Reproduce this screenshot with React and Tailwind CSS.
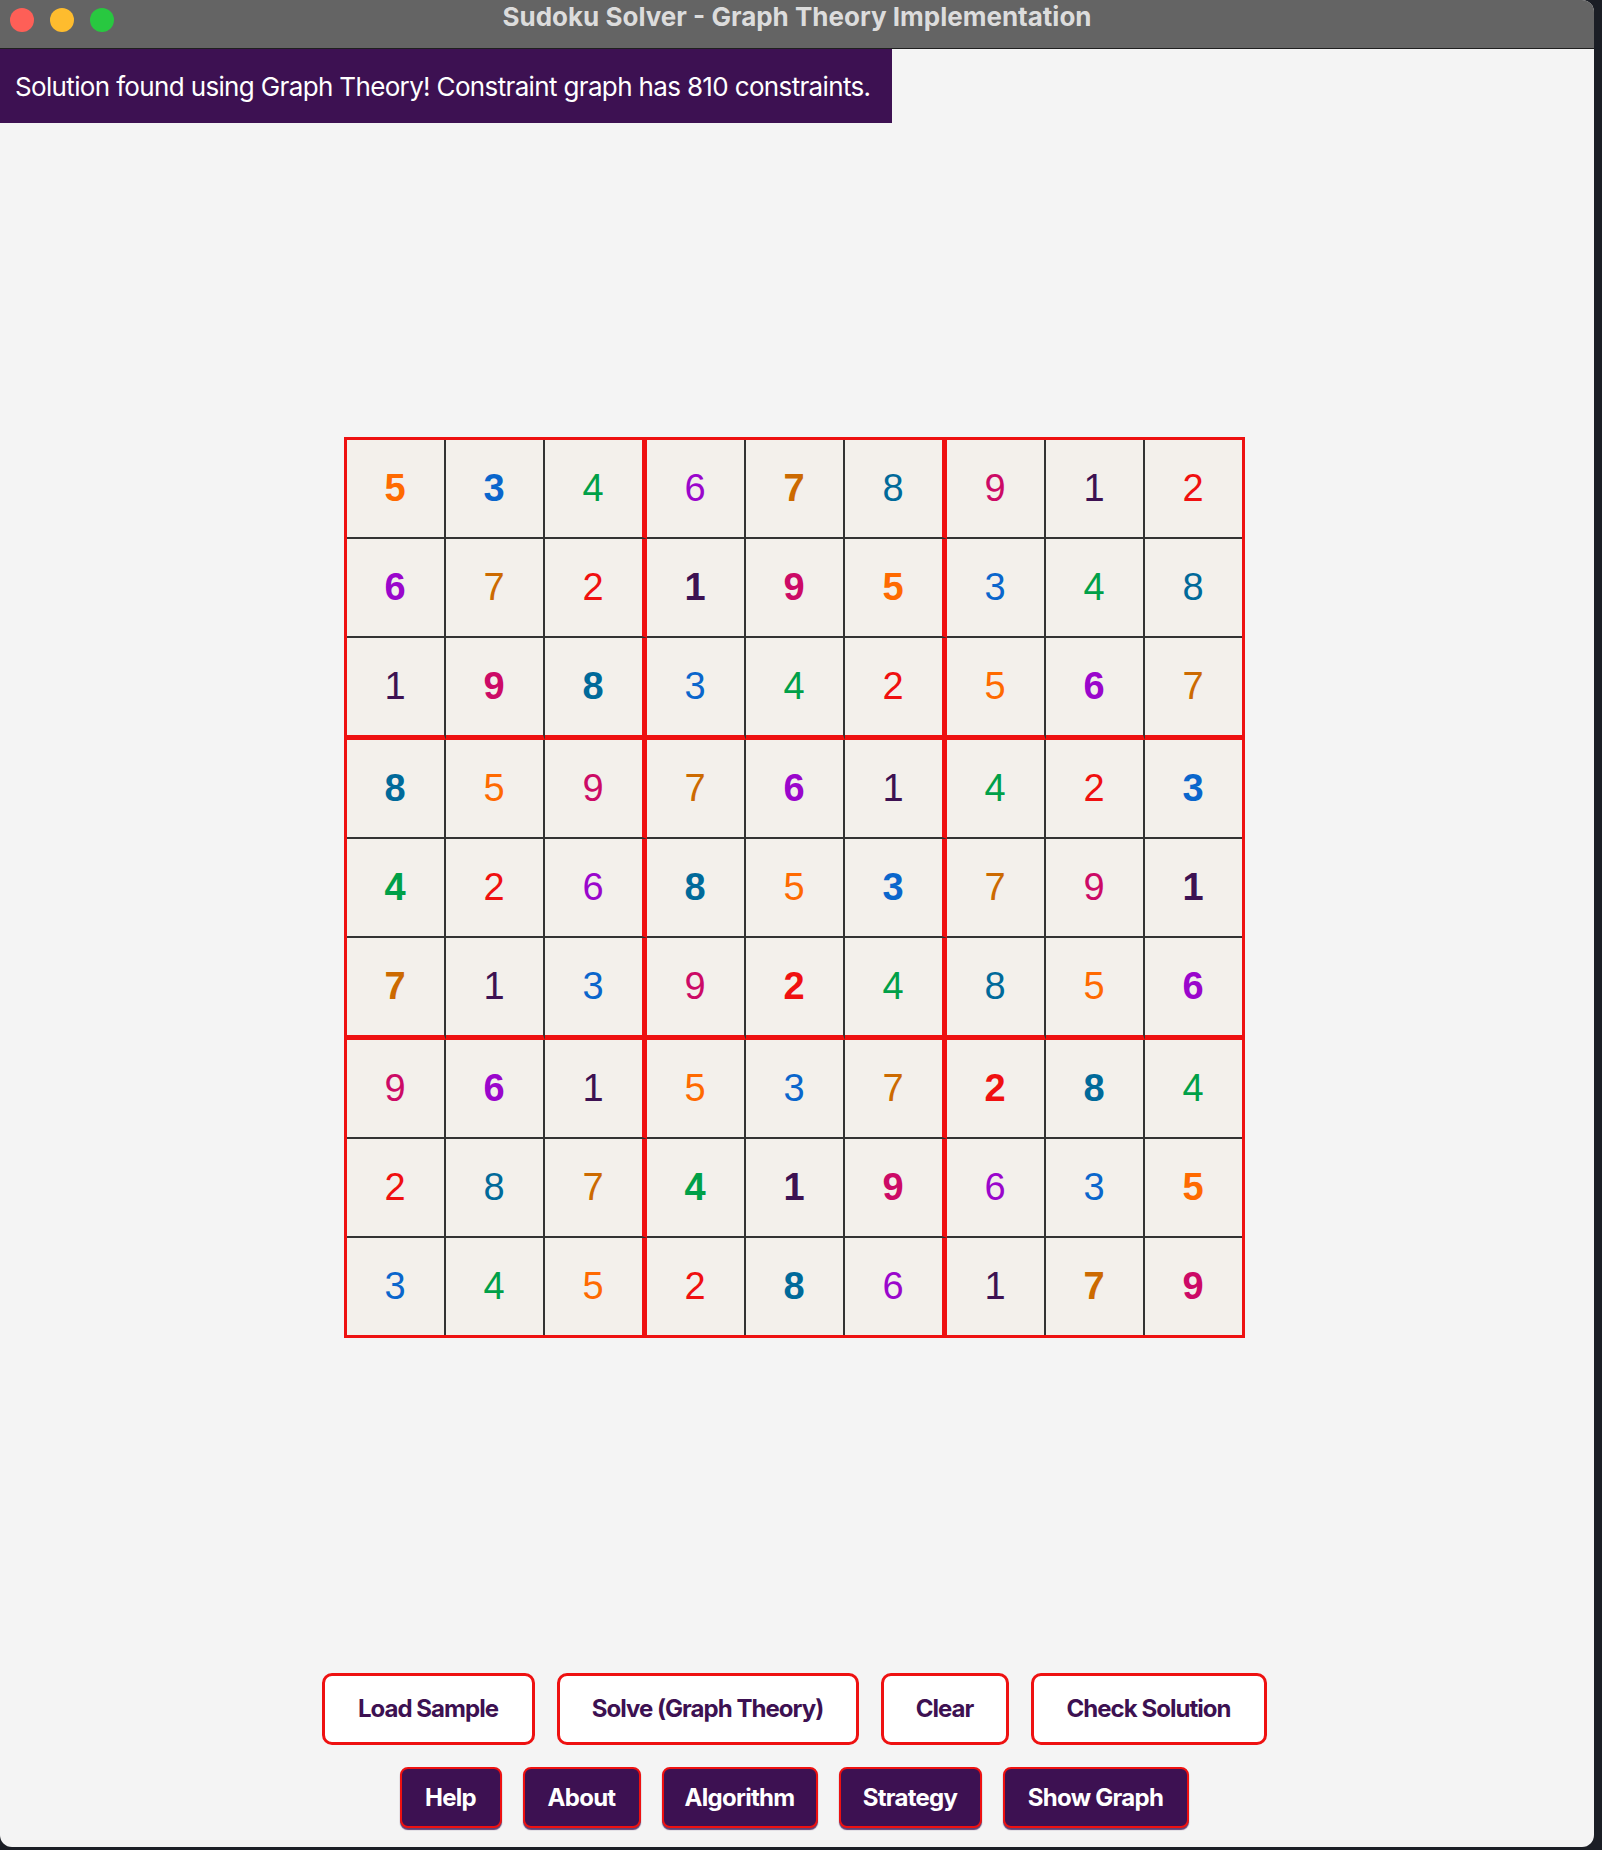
import React from 'react';

const solution = [
  [5, 3, 4, 6, 7, 8, 9, 1, 2],
  [6, 7, 2, 1, 9, 5, 3, 4, 8],
  [1, 9, 8, 3, 4, 2, 5, 6, 7],
  [8, 5, 9, 7, 6, 1, 4, 2, 3],
  [4, 2, 6, 8, 5, 3, 7, 9, 1],
  [7, 1, 3, 9, 2, 4, 8, 5, 6],
  [9, 6, 1, 5, 3, 7, 2, 8, 4],
  [2, 8, 7, 4, 1, 9, 6, 3, 5],
  [3, 4, 5, 2, 8, 6, 1, 7, 9],
];

// the original puzzle cells are shown in bold
const puzzle = [
  [5, 3, 0, 0, 7, 0, 0, 0, 0],
  [6, 0, 0, 1, 9, 5, 0, 0, 0],
  [0, 9, 8, 0, 0, 0, 0, 6, 0],
  [8, 0, 0, 0, 6, 0, 0, 0, 3],
  [4, 0, 0, 8, 0, 3, 0, 0, 1],
  [7, 0, 0, 0, 2, 0, 0, 0, 6],
  [0, 6, 0, 0, 0, 0, 2, 8, 0],
  [0, 0, 0, 4, 1, 9, 0, 0, 5],
  [0, 0, 0, 0, 8, 0, 0, 7, 9],
];

const digitColors = {
  1: 'text-[#3d1152]',
  2: 'text-[#f01010]',
  3: 'text-[#0a66cc]',
  4: 'text-[#00a048]',
  5: 'text-[#ff6a00]',
  6: 'text-[#9a06cc]',
  7: 'text-[#cc6a00]',
  8: 'text-[#006a9a]',
  9: 'text-[#cc0a66]',
};

const mainButtons = [
  { label: 'Load Sample', width: 'w-[213px]' },
  { label: 'Solve (Graph Theory)', width: 'w-[302px]' },
  { label: 'Clear', width: 'w-[128px]' },
  { label: 'Check Solution', width: 'w-[236px]' },
];

const infoButtons = [
  { label: 'Help', width: 'w-[102px]' },
  { label: 'About', width: 'w-[118px]' },
  { label: 'Algorithm', width: 'w-[156px]' },
  { label: 'Strategy', width: 'w-[143px]' },
  { label: 'Show Graph', width: 'w-[186px]' },
];

function Cell({ row, col }) {
  const value = solution[row][col];
  const given = puzzle[row][col] !== 0;

  const right =
    col === 8 ? '' : col === 2 || col === 5 ? 'border-r-[5px] border-r-[#ee1111]' : 'border-r-2 border-r-[#333333]';
  const bottom =
    row === 8 ? '' : row === 2 || row === 5 ? 'border-b-[5px] border-b-[#ee1111]' : 'border-b-2 border-b-[#333333]';

  return (
    <div className={`box-content w-[97px] h-[97px] flex items-center justify-center ${right} ${bottom}`}>
      <span
        className={`pb-[1px] text-[38px] leading-none font-['Liberation_Sans',Arial,sans-serif] ${
          given ? 'font-bold' : 'font-normal'
        } ${digitColors[value]}`}
      >
        {value}
      </span>
    </div>
  );
}

export default function App() {
  return (
    <div className="w-[1602px] h-[1850px] bg-[#1b1e25] font-['Inter','Noto_Sans',sans-serif]">
      <div className="w-[1594px] h-[1847px] flex flex-col bg-[#f4f4f4] rounded-tr-[12px] rounded-b-[12px] overflow-hidden">
        {/* Title bar */}
        <div className="relative h-[49px] shrink-0 flex items-center justify-center bg-[#646464] border-b border-[#1f1f1f]">
          <div className="absolute left-[10px] top-[8px] flex gap-4">
            <span className="w-6 h-6 rounded-full bg-[#fe5f57]" />
            <span className="w-6 h-6 rounded-full bg-[#febc2e]" />
            <span className="w-6 h-6 rounded-full bg-[#28c840]" />
          </div>
          <span className="pb-[16px] text-[26px] font-bold text-[#dcdcdc]">
            Sudoku Solver - Graph Theory Implementation
          </span>
        </div>

        {/* Status banner */}
        <div className="self-start w-[892px] h-[74px] shrink-0 flex items-center pl-[15px] bg-[#3d1152] text-white text-[26px] tracking-[-0.025em] whitespace-nowrap">
          Solution found using Graph Theory! Constraint graph has 810 constraints.
        </div>

        {/* Board */}
        <div className="flex-1 flex items-center justify-center pr-[6px]">
          <div className="border-[3px] border-[#ee1111] bg-[#f3f0eb]">
            {solution.map((r, ri) => (
              <div key={ri} className="flex">
                {r.map((_, ci) => (
                  <Cell key={ci} row={ri} col={ci} />
                ))}
              </div>
            ))}
          </div>
        </div>

        {/* Controls */}
        <div className="shrink-0 flex flex-col items-center gap-[22px] pt-[22px] pb-[19px] pr-[6px]">
          <div className="flex gap-[22px]">
            {mainButtons.map((b) => (
              <button
                key={b.label}
                className={`${b.width} h-[72px] rounded-[10px] border-[3px] border-[#ee1111] bg-white text-[#3d1152] text-[24px] font-bold tracking-[-0.04em] whitespace-nowrap`}
              >
                {b.label}
              </button>
            ))}
          </div>
          <div className="flex gap-[21px]">
            {infoButtons.map((b) => (
              <button
                key={b.label}
                className={`${b.width} h-[61px] rounded-[8px] border-2 border-[#ee1111] bg-[#3d1152] text-white text-[24px] font-bold tracking-[-0.03em] whitespace-nowrap shadow-[0_2px_1px_rgba(61,17,82,0.8)]`}
              >
                {b.label}
              </button>
            ))}
          </div>
        </div>
      </div>
    </div>
  );
}
